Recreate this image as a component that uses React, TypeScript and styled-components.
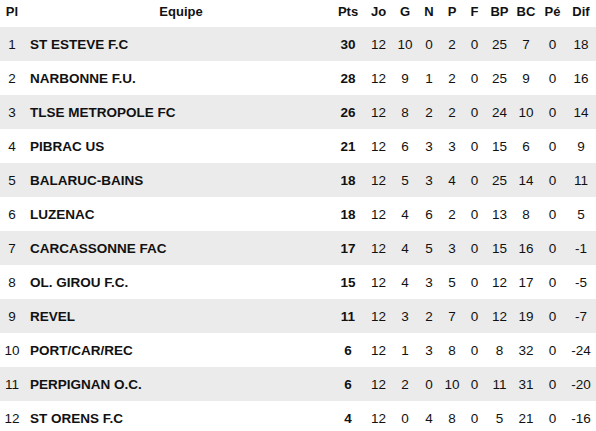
import React from "react";
import styled, { createGlobalStyle } from "styled-components";

const GlobalStyle = createGlobalStyle`
  body {
    margin: 0;
    background: #ffffff;
    font-family: "Liberation Sans", Arial, Helvetica, sans-serif;
    color: #111111;
  }
`;

type Team = {
  pos: number;
  name: string;
  pts: number;
  jo: number;
  g: number;
  n: number;
  p: number;
  f: number;
  bp: number;
  bc: number;
  pe: number;
  dif: number;
};

const teams: Team[] = [
  { pos: 1, name: "ST ESTEVE F.C", pts: 30, jo: 12, g: 10, n: 0, p: 2, f: 0, bp: 25, bc: 7, pe: 0, dif: 18 },
  { pos: 2, name: "NARBONNE F.U.", pts: 28, jo: 12, g: 9, n: 1, p: 2, f: 0, bp: 25, bc: 9, pe: 0, dif: 16 },
  { pos: 3, name: "TLSE METROPOLE FC", pts: 26, jo: 12, g: 8, n: 2, p: 2, f: 0, bp: 24, bc: 10, pe: 0, dif: 14 },
  { pos: 4, name: "PIBRAC US", pts: 21, jo: 12, g: 6, n: 3, p: 3, f: 0, bp: 15, bc: 6, pe: 0, dif: 9 },
  { pos: 5, name: "BALARUC-BAINS", pts: 18, jo: 12, g: 5, n: 3, p: 4, f: 0, bp: 25, bc: 14, pe: 0, dif: 11 },
  { pos: 6, name: "LUZENAC", pts: 18, jo: 12, g: 4, n: 6, p: 2, f: 0, bp: 13, bc: 8, pe: 0, dif: 5 },
  { pos: 7, name: "CARCASSONNE FAC", pts: 17, jo: 12, g: 4, n: 5, p: 3, f: 0, bp: 15, bc: 16, pe: 0, dif: -1 },
  { pos: 8, name: "OL. GIROU F.C.", pts: 15, jo: 12, g: 4, n: 3, p: 5, f: 0, bp: 12, bc: 17, pe: 0, dif: -5 },
  { pos: 9, name: "REVEL", pts: 11, jo: 12, g: 3, n: 2, p: 7, f: 0, bp: 12, bc: 19, pe: 0, dif: -7 },
  { pos: 10, name: "PORT/CAR/REC", pts: 6, jo: 12, g: 1, n: 3, p: 8, f: 0, bp: 8, bc: 32, pe: 0, dif: -24 },
  { pos: 11, name: "PERPIGNAN O.C.", pts: 6, jo: 12, g: 2, n: 0, p: 10, f: 0, bp: 11, bc: 31, pe: 0, dif: -20 },
  { pos: 12, name: "ST ORENS F.C", pts: 4, jo: 12, g: 0, n: 4, p: 8, f: 0, bp: 5, bc: 21, pe: 0, dif: -16 },
];

// column widths, read off the screenshot
const columns = [
  { key: "pl", label: "Pl", width: 24 },
  { key: "equipe", label: "Equipe", width: 308 },
  { key: "pts", label: "Pts", width: 32 },
  { key: "jo", label: "Jo", width: 29 },
  { key: "g", label: "G", width: 24 },
  { key: "n", label: "N", width: 24 },
  { key: "p", label: "P", width: 22 },
  { key: "f", label: "F", width: 23 },
  { key: "bp", label: "BP", width: 27 },
  { key: "bc", label: "BC", width: 26 },
  { key: "pe", label: "Pé", width: 27 },
  { key: "dif", label: "Dif", width: 30 },
];

const Table = styled.table`
  width: 596px;
  border-collapse: collapse;
  table-layout: fixed;
  font-size: 13.5px;
`;

const Col = styled.col<{ $width: number }>`
  width: ${props => props.$width}px;
`;

const HeadCell = styled.th<{ $indent?: boolean }>`
  height: 22px;
  padding: 0 0 5px ${props => (props.$indent ? "6px" : "0")};
  font-size: 13px;
  font-weight: bold;
  text-align: center;
  vertical-align: middle;
  white-space: nowrap;
`;

const Row = styled.tr<{ $striped: boolean }>`
  height: 34px;
  background-color: ${props => (props.$striped ? "#ebebeb" : "transparent")};
`;

const Cell = styled.td<{ $bold?: boolean }>`
  padding: 0;
  text-align: center;
  vertical-align: middle;
  font-weight: ${props => (props.$bold ? "bold" : "normal")};
  white-space: nowrap;
`;

const TeamCell = styled.td`
  padding: 0 0 0 6px;
  text-align: left;
  vertical-align: middle;
  font-weight: bold;
  white-space: nowrap;
`;

export default function App() {
  return (
    <>
      <GlobalStyle />
      <Table>
        <colgroup>
          {columns.map(col => (
            <Col key={col.key} $width={col.width} />
          ))}
        </colgroup>
        <thead>
          <tr>
            {columns.map(col => (
              <HeadCell key={col.key} $indent={col.key === "equipe"}>
                {col.label}
              </HeadCell>
            ))}
          </tr>
        </thead>
        <tbody>
          {teams.map(team => (
            <Row key={team.pos} $striped={team.pos % 2 === 1}>
              <Cell>{team.pos}</Cell>
              <TeamCell>{team.name}</TeamCell>
              <Cell $bold>{team.pts}</Cell>
              <Cell>{team.jo}</Cell>
              <Cell>{team.g}</Cell>
              <Cell>{team.n}</Cell>
              <Cell>{team.p}</Cell>
              <Cell>{team.f}</Cell>
              <Cell>{team.bp}</Cell>
              <Cell>{team.bc}</Cell>
              <Cell>{team.pe}</Cell>
              <Cell>{team.dif}</Cell>
            </Row>
          ))}
        </tbody>
      </Table>
    </>
  );
}
